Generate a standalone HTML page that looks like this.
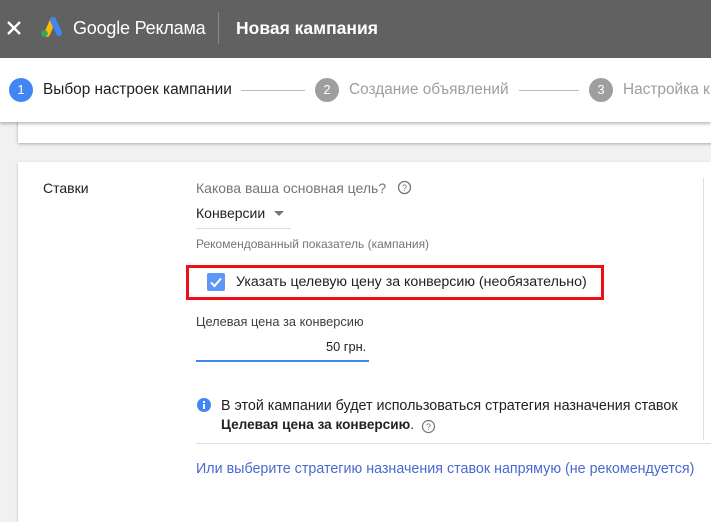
<!DOCTYPE html>
<html><head><meta charset="utf-8"><style>
*{margin:0;padding:0;box-sizing:border-box}
body{width:711px;height:510px;overflow:hidden;background:#f1f1f1;font-family:"Liberation Sans",Arial,sans-serif;position:relative}
.a{position:absolute;white-space:nowrap}
</style></head><body>
<div class="a" style="left:0;top:0;width:711px;height:58px;background:#616161"></div>
<svg class="a" style="left:6px;top:20px" width="16" height="16" viewBox="0 0 16 16"><path d="M2 2L14 14M14 2L2 14" stroke="#fff" stroke-width="2.4"/></svg>
<svg class="a" style="left:38px;top:16px" width="26" height="22" viewBox="0 0 26 22"><path d="M9 18L15 4" stroke="#fbbc04" stroke-width="6" stroke-linecap="round"/><path d="M15 4L21 17" stroke="#4285f4" stroke-width="6" stroke-linecap="round"/><circle cx="6.5" cy="17.5" r="3.3" fill="#34a853"/></svg>
<div class="a" style="left:73px;top:18px;font-size:18px;color:#fff;letter-spacing:-0.2px">Google Реклама</div>
<div class="a" style="left:218px;top:12px;width:1px;height:32px;background:#8a8a8a"></div>
<div class="a" style="left:236px;top:18px;font-size:17.5px;font-weight:bold;color:#fff">Новая кампания</div>
<div class="a" style="left:0;top:58px;width:711px;height:64px;background:#fff;box-shadow:0 2px 3px rgba(0,0,0,.25);z-index:2"></div>
<div class="a" style="z-index:3;left:9px;top:78px;width:24px;height:24px;border-radius:50%;background:#4285f4;color:#fff;font-size:13px;text-align:center;line-height:24px">1</div>
<div class="a" style="z-index:3;left:43px;top:81px;font-size:15.4px;color:#202124">Выбор настроек кампании</div>
<div class="a" style="z-index:3;left:241px;top:90px;width:64px;height:1px;background:#bbb"></div>
<div class="a" style="z-index:3;left:315px;top:78px;width:24px;height:24px;border-radius:50%;background:#9e9e9e;color:#fff;font-size:13px;text-align:center;line-height:24px">2</div>
<div class="a" style="z-index:3;left:349px;top:81px;font-size:15.4px;color:#9e9e9e">Создание объявлений</div>
<div class="a" style="z-index:3;left:519px;top:90px;width:60px;height:1px;background:#bbb"></div>
<div class="a" style="z-index:3;left:589px;top:78px;width:24px;height:24px;border-radius:50%;background:#9e9e9e;color:#fff;font-size:13px;text-align:center;line-height:24px">3</div>
<div class="a" style="z-index:3;left:623px;top:81px;font-size:15.4px;color:#9e9e9e">Настройка к</div>
<div class="a" style="left:18px;top:110px;width:700px;height:33px;background:#fff;box-shadow:0 1px 3px rgba(0,0,0,.3)"></div>
<div class="a" style="left:18px;top:162px;width:700px;height:360px;background:#fff;box-shadow:0 1px 3px rgba(0,0,0,.2)"></div>
<div class="a" style="left:703px;top:178px;width:1px;height:262px;background:#e0e0e0"></div>
<div class="a" style="left:43px;top:180px;font-size:14px;color:#202124">Ставки</div>
<div class="a" style="left:196px;top:180px;font-size:14px;color:#757575">Какова ваша основная цель?</div>
<svg class="a" style="left:397px;top:180px" width="15" height="15" viewBox="0 0 15 15"><circle cx="7.5" cy="7.5" r="6" fill="none" stroke="#757575" stroke-width="1.3"/><text x="7.5" y="11" font-size="9" text-anchor="middle" fill="#757575" font-family="Liberation Sans">?</text></svg>
<div class="a" style="left:196px;top:205px;font-size:14px;color:#202124">Конверсии</div>
<div class="a" style="left:274px;top:211px;width:0;height:0;border-left:5px solid transparent;border-right:5px solid transparent;border-top:5px solid #757575"></div>
<div class="a" style="left:196px;top:228px;width:95px;height:1px;background:#ddd"></div>
<div class="a" style="left:196px;top:237px;font-size:12px;color:#757575">Рекомендованный показатель (кампания)</div>
<div class="a" style="left:186px;top:265px;width:418px;height:35px;border:3px solid #f20d17"></div>
<div class="a" style="left:207px;top:273px;width:18px;height:18px;border-radius:2px;background:#5e97f6"></div>
<svg class="a" style="left:207px;top:273px" width="18" height="18" viewBox="0 0 18 18"><path d="M4 9.5L7.5 13L14 5.5" fill="none" stroke="#fff" stroke-width="2"/></svg>
<div class="a" style="left:236px;top:274px;font-size:14.2px;color:#202124">Указать целевую цену за конверсию (необязательно)</div>
<div class="a" style="left:196px;top:314px;font-size:12.8px;color:#3c4043">Целевая цена за конверсию</div>
<div class="a" style="left:326px;top:339px;font-size:12.8px;color:#202124">50 грн.</div>
<div class="a" style="left:196px;top:360px;width:173px;height:2px;background:#4285f4"></div>
<svg class="a" style="left:196px;top:397px" width="16" height="16" viewBox="0 0 16 16"><circle cx="8" cy="8" r="7" fill="#4285f4"/><rect x="7" y="7" width="2" height="5" fill="#fff"/><rect x="7" y="4" width="2" height="2" fill="#fff"/></svg>
<div class="a" style="left:221px;top:398px;font-size:14.3px;color:#202124">В этой кампании будет использоваться стратегия назначения ставок</div>
<div class="a" style="left:221px;top:417px;font-size:13.6px;color:#202124"><b>Целевая цена за конверсию</b>.</div>
<svg class="a" style="left:421px;top:419px" width="15" height="15" viewBox="0 0 15 15"><circle cx="7.5" cy="7.5" r="6" fill="none" stroke="#757575" stroke-width="1.2"/><text x="7.5" y="11" font-size="9" text-anchor="middle" fill="#757575" font-family="Liberation Sans">?</text></svg>
<div class="a" style="left:196px;top:443px;width:515px;height:1px;background:#e0e0e0"></div>
<div class="a" style="left:196px;top:461px;font-size:14.3px;color:#4a69d0">Или выберите стратегию назначения ставок напрямую (не рекомендуется)</div>
</body></html>
